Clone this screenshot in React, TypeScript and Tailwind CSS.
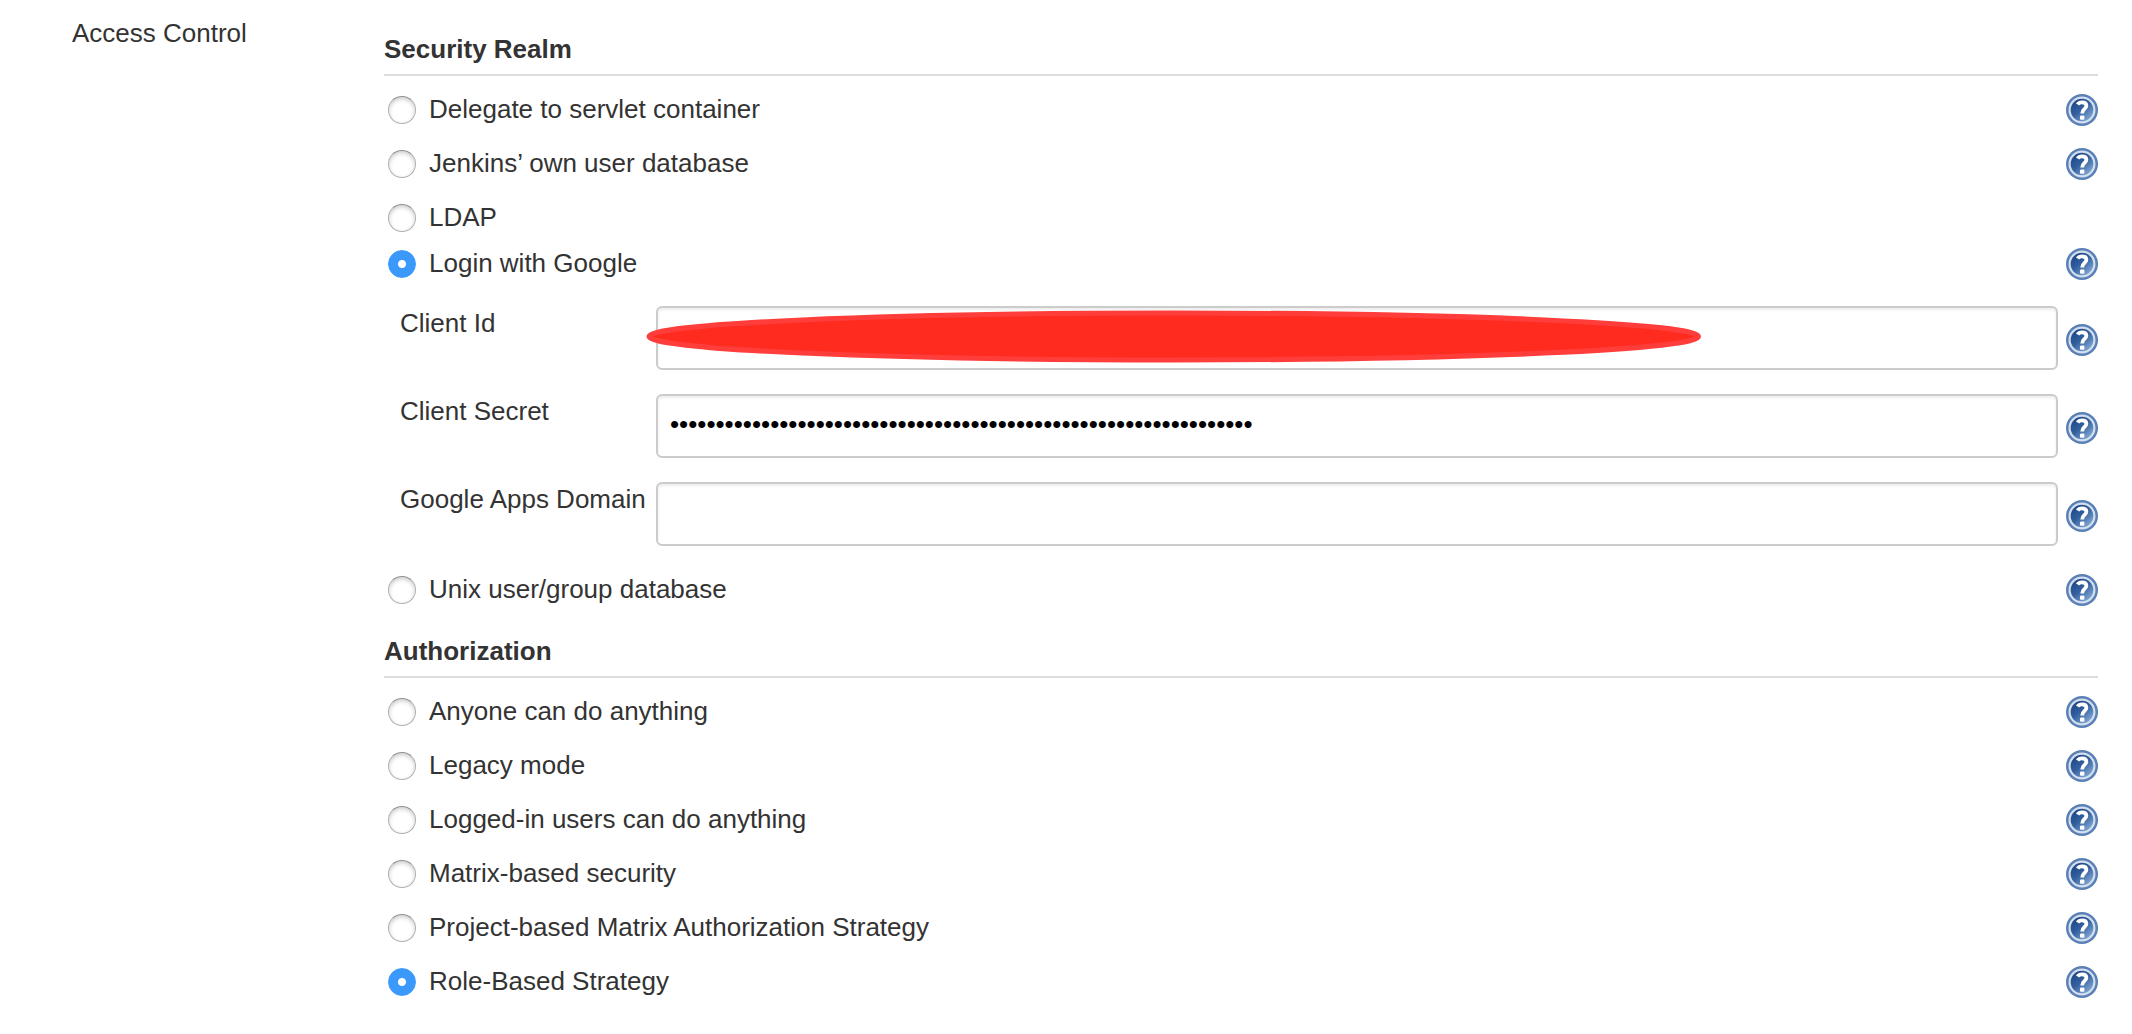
import React, { useId } from "react";

type Option = { label: string; help?: boolean; compact?: boolean; checked?: boolean };

function HelpButton({ topic }: { topic: string }) {
  const id = useId();
  return (
    <button type="button" aria-label={"Help for " + topic} className="block size-8 shrink-0 cursor-pointer">
      <svg viewBox="0 0 32 32" className="block size-8" aria-hidden="true">
        <defs>
          <linearGradient id={id} x1="0.15" y1="0.1" x2="0.85" y2="0.95">
            <stop offset="0" stopColor="#1f4585" />
            <stop offset="0.45" stopColor="#33609f" />
            <stop offset="1" stopColor="#8fb2dc" />
          </linearGradient>
        </defs>
        <circle cx="16" cy="16" r="16" fill="#5b80b6" />
        <circle cx="16" cy="16" r="12.4" fill={"url(#" + id + ")"} stroke="#d3dfef" strokeWidth="2.2" />
        <path
          d="M11.6 10.6 C12.6 9 14 8.4 16 8.4 C18.8 8.4 20.4 9.8 20.4 11.8 C20.4 15 16.2 15 16.2 19.4"
          fill="none"
          stroke="#fff"
          strokeWidth="3.8"
        />
        <rect x="14" y="21.6" width="4.4" height="4.2" rx="1" fill="#fff" />
      </svg>
    </button>
  );
}

function RadioRow({ group, option }: { group: string; option: Option }) {
  const id = useId();
  return (
    <div className={"flex items-center pl-1 " + (option.compact ? "h-[38px]" : "h-[54px]")}>
      <input
        id={id}
        type="radio"
        name={group}
        defaultChecked={option.checked}
        className="size-7 shrink-0 appearance-none rounded-full border border-[#b0b0b0] border-t-[#8f8f8f] bg-white shadow-[inset_0_2px_4px_rgba(0,0,0,0.2)] checked:border-[#3b99fc] checked:bg-[radial-gradient(circle,#fff_0_3.5px,#3b99fc_4.5px)] checked:shadow-none"
      />
      <label htmlFor={id} className="ml-[13px] pb-0.5">
        {option.label}
      </label>
      {option.help !== false && (
        <div className="ml-auto">
          <HelpButton topic={option.label} />
        </div>
      )}
    </div>
  );
}

function Field({
  label,
  type = "text",
  value = "",
  children,
}: {
  label: string;
  type?: string;
  value?: string;
  children?: React.ReactNode;
}) {
  const id = useId();
  return (
    <div className="flex items-start pl-4">
      <label htmlFor={id} className="w-64 shrink-0 pt-px whitespace-nowrap">
        {label}
      </label>
      <div className="relative min-w-0 flex-1">
        <input
          id={id}
          type={type}
          defaultValue={value}
          autoComplete="off"
          className="block h-16 w-full rounded-md border-2 border-[#ccc] bg-white px-3 pb-1 text-black shadow-[inset_0_2px_3px_rgba(0,0,0,0.08)]"
        />
        {children}
      </div>
      <div className="ml-2 pt-[18px]">
        <HelpButton topic={label} />
      </div>
    </div>
  );
}

function Redaction() {
  return (
    <svg
      viewBox="0 0 1054 52"
      preserveAspectRatio="none"
      className="pointer-events-none absolute top-1 -left-2.5 h-[53px] w-[calc(75%+4px)]"
      aria-hidden="true"
    >
      <ellipse cx="527" cy="26" rx="524" ry="23" fill="#ff2b1f" stroke="#ff3d3a" strokeWidth="5" />
    </svg>
  );
}

function Heading({ children }: { children: React.ReactNode }) {
  return <h2 className="mb-[7px] border-b-2 border-[#ddd] pb-[9px] font-bold">{children}</h2>;
}

const realmBefore: Option[] = [
  { label: "Delegate to servlet container" },
  { label: "Jenkins’ own user database" },
  { label: "LDAP", help: false },
  { label: "Login with Google", compact: true, checked: true },
];

const strategies: Option[] = [
  { label: "Anyone can do anything" },
  { label: "Legacy mode" },
  { label: "Logged-in users can do anything" },
  { label: "Matrix-based security" },
  { label: "Project-based Matrix Authorization Strategy" },
  { label: "Role-Based Strategy", checked: true },
];

export default function App() {
  return (
    <form className="flex min-h-screen bg-white pr-[34px] pb-6 pl-[72px] font-['Liberation_Sans',Arial,sans-serif] text-[26px] leading-8 text-[#333]">
      <div className="w-[312px] shrink-0 pt-[17px]">Access Control</div>
      <div className="min-w-0 flex-1 pt-[33px]">
        <section role="radiogroup" aria-label="Security Realm">
          <Heading>Security Realm</Heading>
          {realmBefore.map((option) => (
            <RadioRow key={option.label} group="realm" option={option} />
          ))}
          <div className="flex flex-col gap-6 pt-[23px] pb-[17px]">
            <Field label="Client Id">
              <Redaction />
            </Field>
            <Field label="Client Secret" type="password" value={"x".repeat(64)} />
            <Field label="Google Apps Domain" />
          </div>
          <RadioRow group="realm" option={{ label: "Unix user/group database" }} />
        </section>
        <section role="radiogroup" aria-label="Authorization" className="mt-[18px]">
          <Heading>Authorization</Heading>
          {strategies.map((option) => (
            <RadioRow key={option.label} group="authorization" option={option} />
          ))}
        </section>
      </div>
    </form>
  );
}
